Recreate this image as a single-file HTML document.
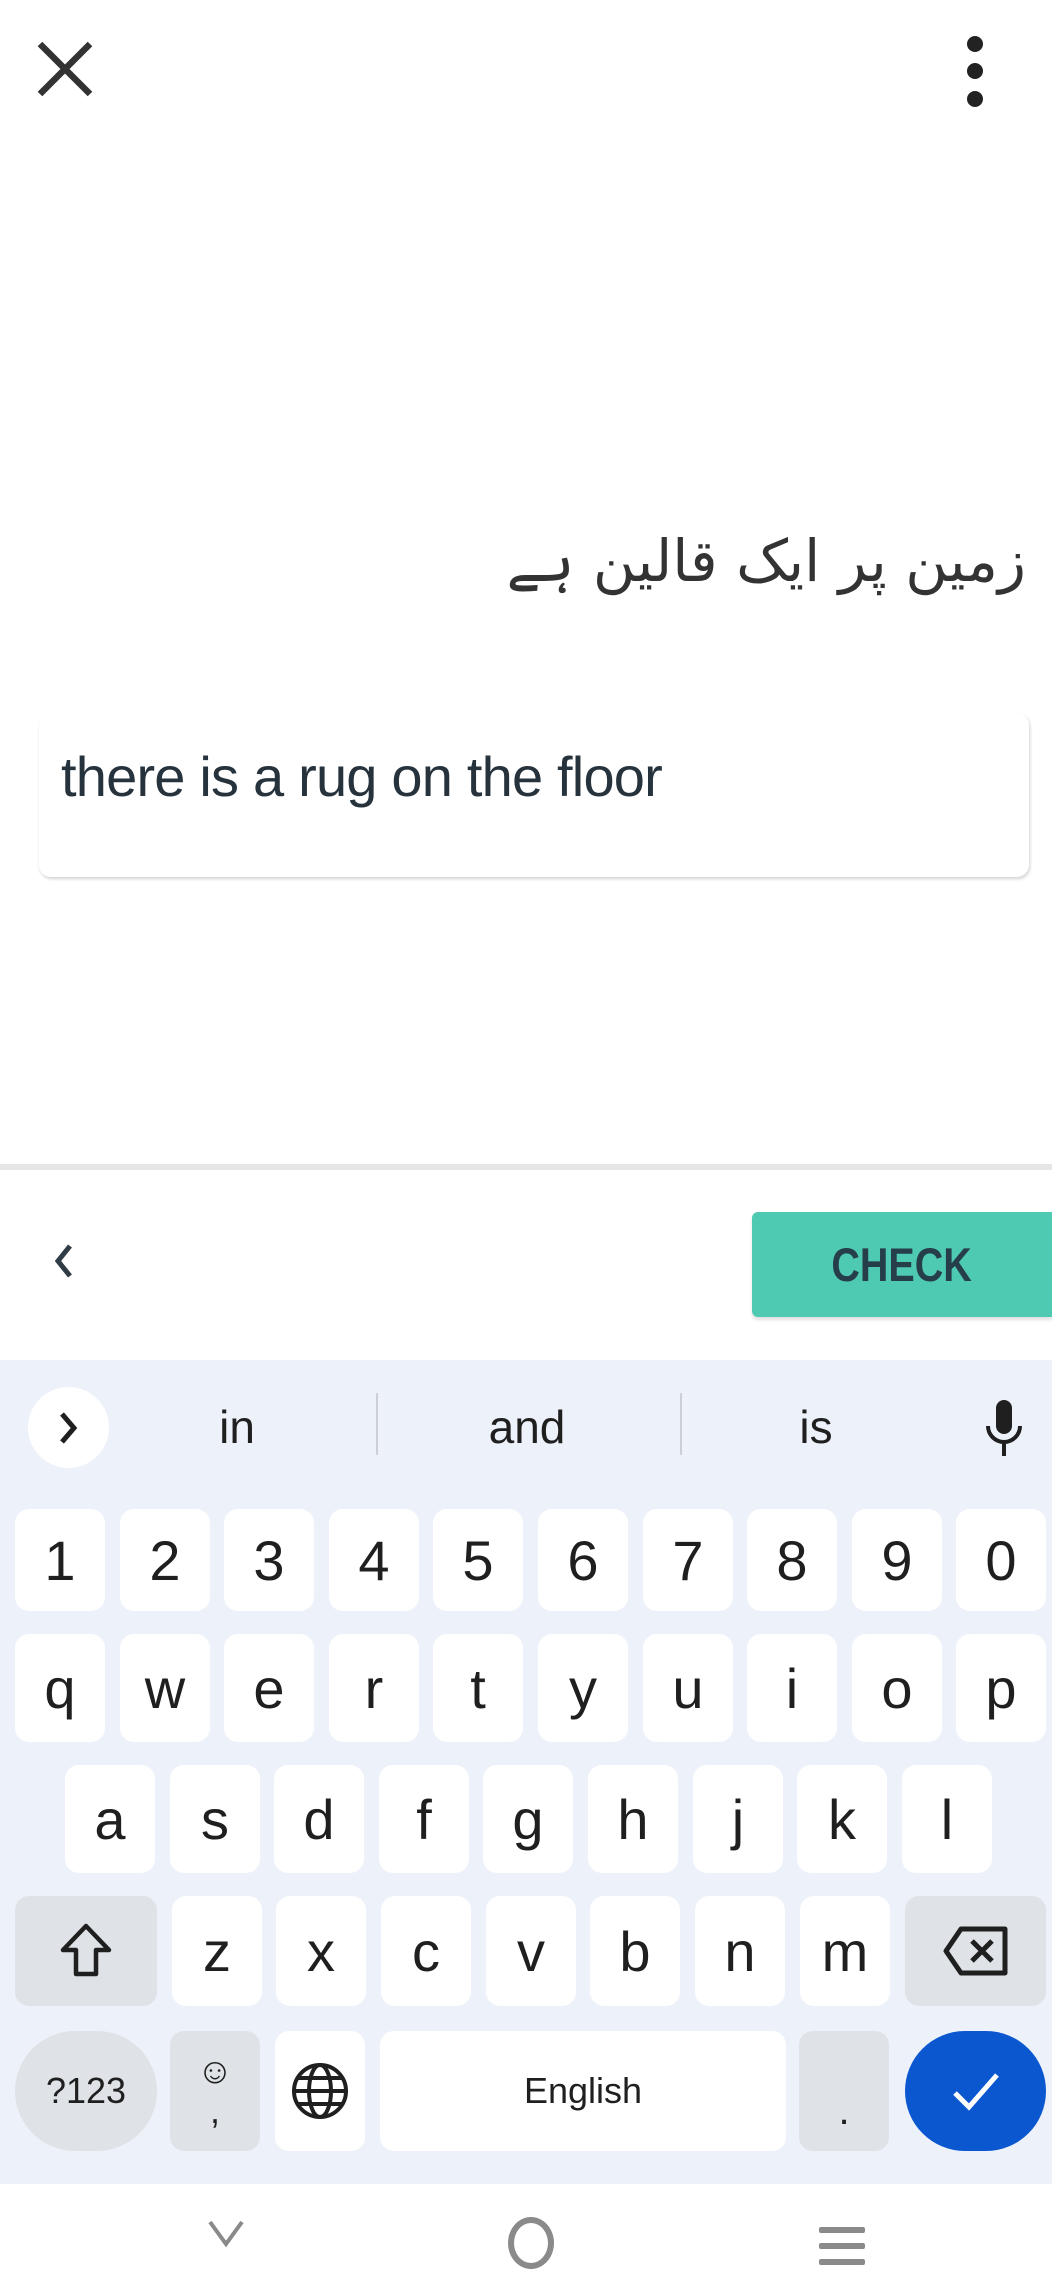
<!DOCTYPE html>
<html><head><meta charset="utf-8"><style>
*{margin:0;padding:0;box-sizing:border-box}
body{width:1052px;height:2280px;position:relative;background:#fff;font-family:"Liberation Sans",sans-serif;overflow:hidden}
.a{position:absolute}
.k{position:absolute;background:#fff;border-radius:14px;display:flex;align-items:center;justify-content:center;font-size:56px;color:#1f1f1f;width:90px}
.g{background:#dfe3e7}
.s{position:absolute;font-size:46px;color:#1f1f1f;transform:translate(-50%,-50%)}
</style></head><body>
<svg class="a" style="left:36px;top:40px" width="58" height="58"><path d="M4 4L54 54M54 4L4 54" stroke="#333" stroke-width="6.5"/></svg>
<div class="a" style="left:967px;top:36px;width:16px;height:16px;border-radius:50%;background:#222"></div>
<div class="a" style="left:967px;top:63px;width:16px;height:16px;border-radius:50%;background:#222"></div>
<div class="a" style="left:967px;top:91px;width:16px;height:16px;border-radius:50%;background:#222"></div>
<div class="a" style="right:26px;top:516px;line-height:90px;font-size:58px;direction:rtl;color:#333;font-family:'DejaVu Sans',sans-serif">زمین پر ایک قالین ہے</div>
<div class="a" style="left:39px;top:713px;width:990px;height:164px;border-radius:12px;box-shadow:1px 2px 3px rgba(0,0,0,.18)"></div>
<div class="a" style="left:61px;top:744px;font-size:56px;color:#26323c;letter-spacing:-0.8px">there is a rug on the floor</div>
<div class="a" style="left:0;top:1164px;width:1052px;height:6px;background:#e6e6e6"></div>
<svg class="a" style="left:50px;top:1240px" width="30" height="42"><path d="M20 6L8 21L20 36" fill="none" stroke="#2f3b45" stroke-width="5"/></svg>
<div class="a" style="left:752px;top:1212px;width:300px;height:105px;background:#4ecab2;border-radius:6px 0 0 6px;box-shadow:0 3px 3px rgba(0,0,0,.12);display:flex;align-items:center;justify-content:center;font-weight:bold;font-size:47px;color:#263d4a"><span style="display:inline-block;transform:scaleX(.84)">CHECK</span></div>
<div class="a" style="left:0;top:1360px;width:1052px;height:824px;background:#edf2fa"></div>
<div class="a" style="left:28px;top:1387px;width:81px;height:81px;border-radius:50%;background:#fff"></div>
<svg class="a" style="left:54px;top:1410px" width="30" height="36"><path d="M8 4L20 18L8 32" fill="none" stroke="#1f1f1f" stroke-width="5"/></svg>
<div class="s" style="left:237px;top:1427px">in</div>
<div class="a" style="left:376px;top:1393px;width:2px;height:62px;background:#ccd0d6"></div>
<div class="s" style="left:527px;top:1427px">and</div>
<div class="a" style="left:680px;top:1393px;width:2px;height:62px;background:#ccd0d6"></div>
<div class="s" style="left:816px;top:1427px">is</div>
<svg class="a" style="left:982px;top:1398px" width="44" height="60"><rect x="14" y="2" width="16" height="34" rx="8" fill="#1f1f1f"/><path d="M6 28a16 16 0 0 0 32 0" fill="none" stroke="#1f1f1f" stroke-width="4"/><path d="M22 44V58" stroke="#1f1f1f" stroke-width="4"/></svg>

<div class="k" style="left:15px;top:1509px;height:102px">1</div>
<div class="k" style="left:120px;top:1509px;height:102px">2</div>
<div class="k" style="left:224px;top:1509px;height:102px">3</div>
<div class="k" style="left:329px;top:1509px;height:102px">4</div>
<div class="k" style="left:433px;top:1509px;height:102px">5</div>
<div class="k" style="left:538px;top:1509px;height:102px">6</div>
<div class="k" style="left:643px;top:1509px;height:102px">7</div>
<div class="k" style="left:747px;top:1509px;height:102px">8</div>
<div class="k" style="left:852px;top:1509px;height:102px">9</div>
<div class="k" style="left:956px;top:1509px;height:102px">0</div>

<div class="k" style="left:15px;top:1634px;height:108px">q</div>
<div class="k" style="left:120px;top:1634px;height:108px">w</div>
<div class="k" style="left:224px;top:1634px;height:108px">e</div>
<div class="k" style="left:329px;top:1634px;height:108px">r</div>
<div class="k" style="left:433px;top:1634px;height:108px">t</div>
<div class="k" style="left:538px;top:1634px;height:108px">y</div>
<div class="k" style="left:643px;top:1634px;height:108px">u</div>
<div class="k" style="left:747px;top:1634px;height:108px">i</div>
<div class="k" style="left:852px;top:1634px;height:108px">o</div>
<div class="k" style="left:956px;top:1634px;height:108px">p</div>

<div class="k" style="left:65px;top:1765px;height:108px">a</div>
<div class="k" style="left:170px;top:1765px;height:108px">s</div>
<div class="k" style="left:274px;top:1765px;height:108px">d</div>
<div class="k" style="left:379px;top:1765px;height:108px">f</div>
<div class="k" style="left:483px;top:1765px;height:108px">g</div>
<div class="k" style="left:588px;top:1765px;height:108px">h</div>
<div class="k" style="left:693px;top:1765px;height:108px">j</div>
<div class="k" style="left:797px;top:1765px;height:108px">k</div>
<div class="k" style="left:902px;top:1765px;height:108px">l</div>

<div class="k g" style="left:15px;top:1896px;height:110px;width:142px"><svg width="54" height="58"><path d="M27 4L50 28H37V52H17V28H4Z" fill="none" stroke="#1f1f1f" stroke-width="4.5" stroke-linejoin="round"/></svg></div>
<div class="k" style="left:172px;top:1896px;height:110px">z</div>
<div class="k" style="left:276px;top:1896px;height:110px">x</div>
<div class="k" style="left:381px;top:1896px;height:110px">c</div>
<div class="k" style="left:486px;top:1896px;height:110px">v</div>
<div class="k" style="left:590px;top:1896px;height:110px">b</div>
<div class="k" style="left:695px;top:1896px;height:110px">n</div>
<div class="k" style="left:800px;top:1896px;height:110px">m</div>
<div class="k g" style="left:905px;top:1896px;height:110px;width:141px"><svg width="70" height="56"><path d="M20 6H64V50H20L5 28Z" fill="none" stroke="#1f1f1f" stroke-width="5" stroke-linejoin="round"/><path d="M31 18L51 38M51 18L31 38" stroke="#1f1f1f" stroke-width="5"/></svg></div>

<div class="k g" style="left:15px;top:2031px;height:120px;width:142px;border-radius:60px;font-size:36px">?123</div>
<div class="k g" style="left:170px;top:2031px;height:120px;flex-direction:column;font-size:36px"><span style="font-size:36px;line-height:40px">☺</span><span style="line-height:40px">,</span></div>
<div class="k" style="left:275px;top:2031px;height:120px"><svg width="60" height="60"><g fill="none" stroke="#1f1f1f" stroke-width="4"><circle cx="30" cy="30" r="26"/><ellipse cx="30" cy="30" rx="11" ry="26"/><path d="M4 30H56M8 17H52M8 43H52"/></g></svg></div>
<div class="k" style="left:380px;top:2031px;height:120px;width:406px;font-size:36px">English</div>
<div class="k g" style="left:799px;top:2031px;height:120px;font-size:40px;padding-top:40px">.</div>
<div class="k" style="left:905px;top:2031px;height:120px;width:141px;border-radius:60px;background:#0b57d0"><svg width="54" height="44"><path d="M6 24L20 38L48 6" fill="none" stroke="#fff" stroke-width="5"/></svg></div>

<svg class="a" style="left:206px;top:2218px" width="40" height="32"><path d="M4 4L20 26L36 4" fill="none" stroke="#8a8a8a" stroke-width="4"/></svg>
<div class="a" style="left:508px;top:2217px;width:46px;height:52px;border-radius:50%;border:6px solid #8a8a8a"></div>
<div class="a" style="left:819px;top:2227px;width:46px;height:6px;background:#8a8a8a;border-radius:2px"></div>
<div class="a" style="left:819px;top:2243px;width:46px;height:6px;background:#8a8a8a;border-radius:2px"></div>
<div class="a" style="left:819px;top:2259px;width:46px;height:6px;background:#8a8a8a;border-radius:2px"></div>
</body></html>
